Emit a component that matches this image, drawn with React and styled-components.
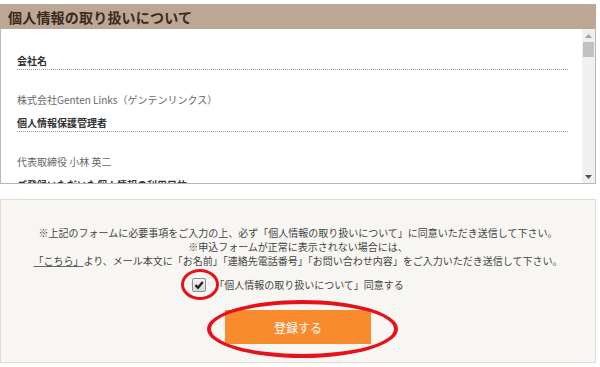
import React from "react";
import styled, { createGlobalStyle } from "styled-components";

const GlobalStyle = createGlobalStyle`
  html, body {
    margin: 0;
    padding: 0;
    background: #fff;
  }
  body {
    font-family: "Noto Sans CJK JP", "Noto Sans", sans-serif;
  }
`;

const Page = styled.div`
  width: 596px;
  padding-top: 4px;
`;

const SectionHeader = styled.h2`
  margin: 0;
  height: 25px;
  display: flex;
  align-items: center;
  padding-left: 8px;
  background-color: #bca795;
  color: #3b2a1c;
  font-size: 14px;
  font-weight: 700;
  letter-spacing: 0.2px;
`;

const ScrollBox = styled.div`
  display: flex;
  height: 154px;
  border: 1px solid #c3b4a7;
  border-top: none;
  background: #fff;
`;

const ScrollContent = styled.dl`
  flex: 1;
  margin: 0;
  overflow: hidden;
  padding: 25px 14px 0 16px;
`;

const Term = styled.dt`
  margin-top: ${(p) => (p.first ? "0" : "9px")};
  padding-bottom: 1px;
  border-bottom: 1px dotted #9a9a9a;
  font-size: 10px;
  line-height: 14px;
  font-weight: 700;
  color: #333;
`;

const Desc = styled.dd`
  margin: 23px 0 0;
  font-size: 10px;
  line-height: 14px;
  color: #666;
`;

const Scrollbar = styled.div`
  width: 13px;
  display: flex;
  flex-direction: column;
  align-items: center;
  background: #f0f0f0;
`;

const Arrow = styled.div`
  height: 13px;
  width: 13px;
  display: flex;
  align-items: center;
  justify-content: center;
`;

const Thumb = styled.div`
  width: 11px;
  height: 15px;
  background: #c1c1c1;
`;

const Track = styled.div`
  flex: 1;
`;

const AgreeBox = styled.div`
  margin-top: 15px;
  border: 1px solid #e6dccd;
  background: #f8f6f2;
  padding: 26px 0 18px;
  text-align: center;
  color: #444;
`;

const Notes = styled.p`
  margin: 0;
  font-size: 10px;
  line-height: 14px;
`;

const Link = styled.a`
  color: #444;
  text-decoration: underline;
  text-decoration-color: #666;
`;

const AgreeRow = styled.label`
  margin-top: 9px;
  display: flex;
  justify-content: center;
  align-items: center;
  gap: 8px;
  height: 15px;
  font-size: 10px;
  color: #444;
`;

const Marked = styled.span`
  position: relative;
  display: inline-flex;
`;

const CheckBox = styled.span`
  width: 12px;
  height: 12px;
  border: 1px solid #8e8e8e;
  border-radius: 2px;
  background: linear-gradient(#f4f4f4, #d8d8d8);
  display: flex;
  align-items: center;
  justify-content: center;
`;

const RedRing = styled.span`
  position: absolute;
  left: ${(p) => p.left}px;
  top: ${(p) => p.top}px;
  width: ${(p) => p.w}px;
  height: ${(p) => p.h}px;
  box-sizing: border-box;
  border: ${(p) => p.stroke}px solid #e5121c;
  border-radius: 50%;
  pointer-events: none;
`;

const ButtonRow = styled.div`
  margin-top: 18px;
  display: flex;
  justify-content: center;
`;

const SubmitButton = styled.button`
  width: 146px;
  height: 34px;
  border: none;
  background: #f98b2f;
  color: #fff;
  font-family: inherit;
  font-size: 12px;
  cursor: pointer;
`;

export default function App() {
  return (
    <>
      <GlobalStyle />
      <Page>
        <SectionHeader>個人情報の取り扱いについて</SectionHeader>
        <ScrollBox>
          <ScrollContent>
            <Term first>会社名</Term>
            <Desc>株式会社Genten Links（ゲンテンリンクス）</Desc>
            <Term>個人情報保護管理者</Term>
            <Desc>代表取締役 小林 英二</Desc>
            <Term>ご登録いただいた個人情報の利用目的</Term>
            <Desc>お客様からのお問い合わせへの回答のため</Desc>
          </ScrollContent>
          <Scrollbar>
            <Arrow>
              <svg width="7" height="4" viewBox="0 0 7 4">
                <path d="M0 4 L3.5 0 L7 4 Z" fill="#a3a3a3" />
              </svg>
            </Arrow>
            <Thumb />
            <Track />
            <Arrow>
              <svg width="7" height="4" viewBox="0 0 7 4">
                <path d="M0 0 L7 0 L3.5 4 Z" fill="#505050" />
              </svg>
            </Arrow>
          </Scrollbar>
        </ScrollBox>
        <AgreeBox>
          <Notes>
            ※上記のフォームに必要事項をご入力の上、必ず「個人情報の取り扱いについて」に同意いただき送信して下さい。
          </Notes>
          <Notes>※申込フォームが正常に表示されない場合には、</Notes>
          <Notes>
            <Link href="#">「こちら」</Link>
            より、メール本文に「お名前」「連絡先電話番号」「お問い合わせ内容」をご入力いただき送信して下さい。
          </Notes>
          <AgreeRow>
            <Marked>
              <CheckBox>
                <svg width="10" height="10" viewBox="0 0 10 10">
                  <path
                    d="M1.5 5.2 L4 7.8 L8.8 2"
                    fill="none"
                    stroke="#222"
                    strokeWidth="2.4"
                  />
                </svg>
              </CheckBox>
              <RedRing left={-11} top={-9} w={38} h={31} stroke={3.5} />
            </Marked>
            <span>「個人情報の取り扱いについて」同意する</span>
          </AgreeRow>
          <ButtonRow>
            <Marked>
              <SubmitButton type="button">登録する</SubmitButton>
              <RedRing left={-18} top={-10} w={191} h={58} stroke={4} />
            </Marked>
          </ButtonRow>
        </AgreeBox>
      </Page>
    </>
  );
}
